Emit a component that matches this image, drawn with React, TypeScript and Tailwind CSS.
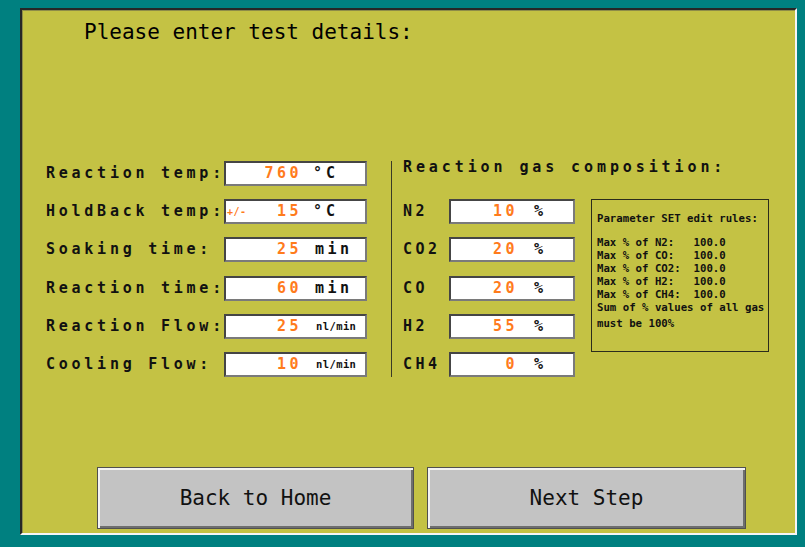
import React from "react";

type LeftRow = { label: string; value: string; unit: string; prefix?: boolean };

const leftRows: LeftRow[] = [
  { label: "Reaction temp:", value: "760", unit: "°C" },
  { label: "HoldBack temp:", value: "15", unit: "°C", prefix: true },
  { label: "Soaking time:", value: "25", unit: "min" },
  { label: "Reaction time:", value: "60", unit: "min" },
  { label: "Reaction Flow:", value: "25", unit: "nl/min" },
  { label: "Cooling Flow:", value: "10", unit: "nl/min" },
];

const rightRows = [
  { label: "N2", value: "10" },
  { label: "CO2", value: "20" },
  { label: "CO", value: "20" },
  { label: "H2", value: "55" },
  { label: "CH4", value: "0" },
];

function Unit({ unit }: { unit: string }) {
  if (unit === "nl/min") {
    return (
      <span className="ml-[14px] text-[10.5px] font-bold tracking-[0.4px] text-[#111] leading-none">
        nl/min
      </span>
    );
  }
  if (unit === "°C") {
    return (
      <span className="ml-[11px] text-[15px] font-bold tracking-[4px] text-[#111] leading-none">°C</span>
    );
  }
  return (
    <span className="ml-[13px] text-[15px] font-bold tracking-[3.5px] text-[#111] leading-none">{unit}</span>
  );
}

function LeftBox({ row }: { row: LeftRow }) {
  return (
    <div className="w-[143px] h-[25px] bg-white border-2 border-t-[#454545] border-l-[#454545] border-b-[#7a7a7a] border-r-[#7a7a7a] flex items-center">
      <span className="w-[76px] flex items-center justify-between">
        {row.prefix ? (
          <span className="pl-[1px] text-[10px] leading-none tracking-[0.5px] text-[#ff7b1c] font-bold">+/-</span>
        ) : (
          <span />
        )}
        <span className="text-[15px] font-bold tracking-[3.5px] leading-none text-[#ff7b1c]">{row.value}</span>
      </span>
      <Unit unit={row.unit} />
    </div>
  );
}

function RightBox({ value }: { value: string }) {
  return (
    <div className="w-[126px] h-[25px] bg-white border-2 border-t-[#454545] border-l-[#454545] border-b-[#7a7a7a] border-r-[#7a7a7a] flex items-center">
      <span className="w-[67px] text-right text-[15px] font-bold tracking-[3.5px] leading-none text-[#ff7b1c]">{value}</span>
      <span className="ml-[16px] text-[15px] font-bold leading-none text-[#111]">%</span>
    </div>
  );
}

function Button({ label, w }: { label: string; w: string }) {
  return (
    <div
      className={
        w +
        " h-[62px] bg-[#c3c3c3] border border-[#505050] shadow-[inset_2px_2px_0_#f4f4f4,inset_-2px_-2px_0_#6e6e6e] flex items-center justify-center text-[21px] leading-none text-[#111]"
      }
    >
      {label}
    </div>
  );
}

export default function App() {
  return (
    <div className="w-[805px] h-[547px] bg-[#008080] pt-[8px] pl-[20px] pr-[8px] pb-[12px] font-['DejaVu_Sans_Mono',monospace]">
      <div className="h-full flex flex-col bg-[#c4c244] border-2 border-t-[#262626] border-l-[#262626] border-b-[#f6f6f6] border-r-[#f6f6f6] shadow-[inset_1px_1px_0_#8e8c48]">
        <div className="mt-[10px] pl-[62px] text-[21px] leading-[24px] text-black">Please enter test details:</div>

        <div className="mt-[117px] flex">
          <div className="pl-[24px] flex flex-col gap-y-[13.2px]">
            {leftRows.map((r) => (
              <div key={r.label} className="flex items-center h-[25px]">
                <span className="w-[178px] text-[15px] font-bold tracking-[3.75px] leading-none text-[#111] whitespace-pre">
                  {r.label}
                </span>
                <LeftBox row={r} />
              </div>
            ))}
          </div>

          <div className="ml-[24px] w-px bg-[#3a3a26]" />

          <div className="ml-[11px] flex flex-col">
            <div className="h-[25px] flex items-start">
              <span className="text-[15px] font-bold tracking-[3.9px] leading-[12px] text-[#111] whitespace-pre">
                Reaction gas composition:
              </span>
            </div>
            <div className="mt-[13.2px] flex items-start">
              <div className="flex flex-col gap-y-[13.2px]">
                {rightRows.map((r) => (
                  <div key={r.label} className="flex items-center h-[25px]">
                    <span className="w-[46px] text-[15px] font-bold tracking-[3.5px] leading-none text-[#111]">
                      {r.label}
                    </span>
                    <RightBox value={r.value} />
                  </div>
                ))}
              </div>

              <div className="ml-[16px] w-[178px] h-[153px] border border-[#2c2c1c] pl-[5px] pt-[12px] text-[10.7px] font-bold text-[#111] whitespace-pre">
                <div className="leading-[13px]">Parameter SET edit rules:</div>
                <div className="mt-[11px] leading-[13px]">
                  <div>Max % of N2:   100.0</div>
                  <div>Max % of CO:   100.0</div>
                  <div>Max % of CO2:  100.0</div>
                  <div>Max % of H2:   100.0</div>
                  <div>Max % of CH4:  100.0</div>
                  <div>Sum of % values of all gas</div>
                  <div className="mt-[3px]">must be 100%</div>
                </div>
              </div>
            </div>
          </div>
        </div>

        <div className="mt-auto mb-[4px] pl-[75px] flex gap-[13px]">
          <Button label="Back to Home" w="w-[317px]" />
          <Button label="Next Step" w="w-[319px]" />
        </div>
      </div>
    </div>
  );
}
